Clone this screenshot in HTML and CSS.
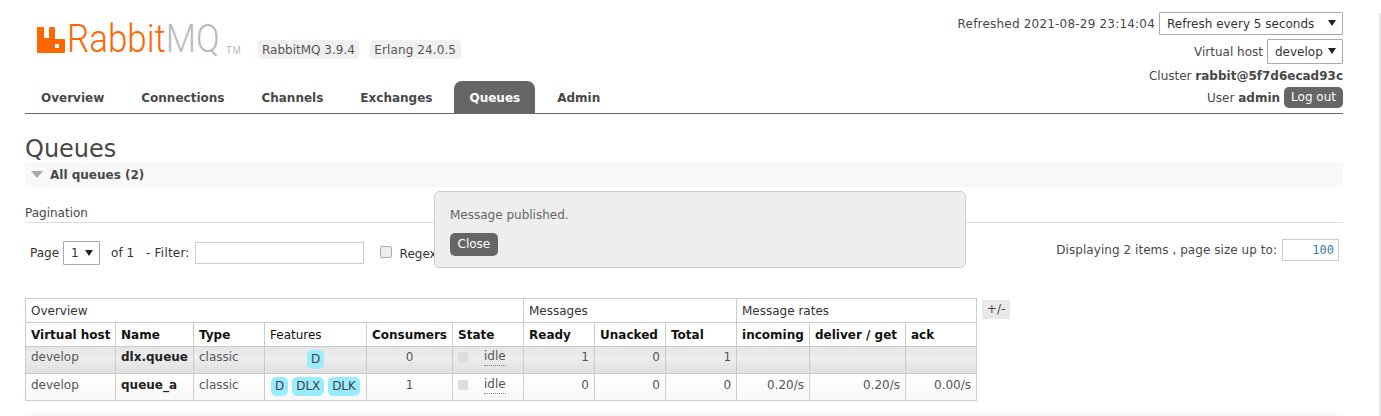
FILE: index.html
```html
<!DOCTYPE html>
<html lang="en">
<head>
<meta charset="utf-8">
<title>RabbitMQ Management</title>
<link rel="stylesheet" href="styles.css">
</head>
<body>
<div class="page">
  <header class="header">
    <div class="brand">
      <div class="logo">
        <svg class="logo-mark" width="28" height="26" viewBox="0 0 28 26"><path fill="#f60" fill-rule="evenodd" d="M1 0h5a1 1 0 0 1 1 1v10h5V1a1 1 0 0 1 1-1h4a1 1 0 0 1 1 1v11h9a1 1 0 0 1 1 1v12a1 1 0 0 1-1 1H1a1 1 0 0 1-1-1V1a1 1 0 0 1 1-1zm17 17v4h4v-4z"/></svg>
        <span class="logo-text"><span class="rabbit">Rabbit</span><span class="mq">MQ</span></span>
        <span class="tm">TM</span>
      </div>
      <span class="version first">RabbitMQ 3.9.4</span>
      <span class="version second">Erlang 24.0.5</span>
    </div>
    <div class="status">
      <div class="status-row refresh-row"><span class="digits">Refreshed 2021-08-29 23:14:04</span><span class="select select-refresh">Refresh every 5 seconds<i class="arrow"></i></span></div>
      <div class="status-row vhost-row"><span>Virtual host</span><span class="select select-vhost">develop<i class="arrow"></i></span></div>
      <div class="status-row cluster-row"><span>Cluster <b>rabbit@5f7d6ecad93c</b></span></div>
      <div class="status-row user-row"><span>User <b>admin</b></span><span class="btn logout">Log out</span></div>
    </div>
    <nav class="tabs">
      <a class="tab">Overview</a>
      <a class="tab">Connections</a>
      <a class="tab">Channels</a>
      <a class="tab">Exchanges</a>
      <a class="tab active">Queues</a>
      <a class="tab">Admin</a>
    </nav>
  </header>

  <main>
    <h1>Queues</h1>
    <div class="section-head"><span class="triangle"></span>All queues (2)</div>
    <h3>Pagination</h3>
    <div class="pager">
      <div class="pager-left">
        <span>Page</span>
        <span class="select select-page">1<i class="arrow"></i></span>
        <span class="of">of 1</span>
        <span class="filter-label">- Filter:</span>
        <span class="filter-input"></span>
        <span class="checkbox"></span>
        <span class="regex">Regex</span>
      </div>
      <div class="pager-right">
        <span class="display-count">Displaying 2 items , page size up to:</span>
        <span class="size-input">100</span>
      </div>
    </div>

    <div class="table-wrap">
      <table class="queues">
        <colgroup>
          <col class="c1"><col class="c2"><col class="c3"><col class="c4"><col class="c5"><col class="c6">
          <col class="c7"><col class="c8"><col class="c9"><col class="c10"><col class="c11"><col class="c12">
        </colgroup>
        <thead>
          <tr class="group"><th colspan="6">Overview</th><th colspan="3">Messages</th><th colspan="3">Message rates</th></tr>
          <tr class="cols">
            <th>Virtual host</th><th>Name</th><th>Type</th><th class="plain">Features</th><th>Consumers</th><th>State</th>
            <th>Ready</th><th>Unacked</th><th>Total</th><th>incoming</th><th>deliver / get</th><th>ack</th>
          </tr>
        </thead>
        <tbody>
          <tr class="alt1">
            <td>develop</td><td class="name">dlx.queue</td><td>classic</td>
            <td class="center"><span class="tag">D</span></td>
            <td class="center">0</td>
            <td><span class="state"><i class="dot"></i><abbr>idle</abbr></span></td>
            <td class="num">1</td><td class="num">0</td><td class="num">1</td>
            <td></td><td></td><td></td>
          </tr>
          <tr class="alt2">
            <td>develop</td><td class="name">queue_a</td><td>classic</td>
            <td class="center"><span class="tag">D</span> <span class="tag">DLX</span> <span class="tag">DLK</span></td>
            <td class="center">1</td>
            <td><span class="state"><i class="dot"></i><abbr>idle</abbr></span></td>
            <td class="num">0</td><td class="num">0</td><td class="num">0</td>
            <td class="num">0.20/s</td><td class="num">0.20/s</td><td class="num">0.00/s</td>
          </tr>
        </tbody>
      </table>
      <span class="plus-minus">+/-</span>
    </div>
    <div class="next-section"></div>
  </main>
</div>

<div class="popup">
  <p>Message published.</p>
  <span class="btn close">Close</span>
</div>
<div class="edge"></div>
</body>
</html>
```
FILE: styles.css
```css
* { box-sizing: border-box; }
html, body { margin: 0; height: 416px; overflow: hidden; background: #fff; }
body { font: 12px/16px "DejaVu Sans", Verdana, sans-serif; color: #484848; position: relative; }
.page { padding: 0 38px 0 25px; }
.edge { position: absolute; right: 0; top: 13px; bottom: 0; width: 2px; background: #e6e6e6; }

.header { position: relative; height: 114px; border-bottom: 1px solid #666; }
.brand { position: absolute; left: 12px; top: 25px; display: flex; align-items: flex-start; }
.logo { position: relative; width: 221px; height: 29px; flex: none; }
.logo-mark { position: absolute; left: 0; top: 2px; }
.logo-text { position: absolute; left: 30px; top: -5px; font: 300 38px/38px Roboto, sans-serif; transform: scaleX(.92); transform-origin: 0 0; white-space: nowrap; }
.rabbit { color: #f60; }
.mq { color: #bbb; }
.tm { position: absolute; left: 189px; top: 20px; font: 10px/11px "Liberation Sans", sans-serif; color: #bbb; letter-spacing: .5px; }
.version { margin-top: 15px; height: 19px; padding: 0 4px; background: #f0f0f0; border-radius: 4px; line-height: 20px; white-space: nowrap; color: #555; }
.version.first { margin-right: 11px; }
.version.second { padding: 0 4.5px; letter-spacing: .1px; }

.status { position: absolute; right: 0; top: 12px; display: flex; flex-direction: column; align-items: flex-end; }
.status-row { display: flex; align-items: center; white-space: nowrap; }
.digits { letter-spacing: .2px; }
.status b { color: #484848; }
.refresh-row { height: 23px; }
.vhost-row { height: 25px; margin-top: 4px; }
.cluster-row { height: 16px; margin-top: 4px; }
.user-row { height: 21px; margin-top: 3px; }
.select { position: relative; display: inline-block; height: 23px; line-height: 22px; border: 1px solid #aaa; background: #fff; border-radius: 1px; color: #333; padding-left: 7px; white-space: nowrap; }
.arrow { position: absolute; top: 7px; right: 6px; width: 0; height: 0; border-left: 4px solid transparent; border-right: 4px solid transparent; border-top: 6px solid #222; }
.select-refresh { width: 184px; margin-left: 4px; }
.select-vhost { width: 76px; height: 25px; line-height: 24px; margin-left: 4px; }
.select-vhost .arrow { top: 8px; }
.btn { display: inline-block; background: #666; color: #fff; border-radius: 5px; }
.logout { height: 21px; line-height: 21px; padding: 0 7px; margin-left: 4px; }

.tabs { position: absolute; left: 1px; bottom: 0; height: 32px; display: flex; }
.tab { height: 32px; padding: 0 15px; margin-right: 7px; line-height: 35px; font-weight: bold; color: #484848; white-space: nowrap; }
.tab.active { background: #666; color: #fff; border-radius: 8px 8px 0 0; }

main { display: block; }
h1 { margin: 20px 0 0; height: 28px; font-size: 24px; line-height: 31px; font-weight: normal; color: #484848; }
.section-head { display: flex; align-items: center; height: 25px; background: #f8f8f8; font-weight: bold; font-size: 12px; color: #484848; padding-left: 6px; }
.triangle { width: 0; height: 0; margin-right: 7px; border-left: 6px solid transparent; border-right: 6px solid transparent; border-top: 7px solid #aaa; }
h3 { margin: 18px 0 0; height: 18px; border-bottom: 1px solid #ddd; font-size: 12px; line-height: 17px; font-weight: normal; color: #484848; }

.pager { display: flex; justify-content: space-between; align-items: flex-start; height: 24px; margin-top: 18px; padding: 0 4px 0 5px; }
.pager-left, .pager-right { display: flex; align-items: center; white-space: nowrap; }
.pager-left { height: 24px; color: #333; }
.pager-right { height: 22px; margin-top: -2px; }
.display-count { letter-spacing: .05px; }
.select-page { width: 37px; height: 24px; line-height: 23px; margin-left: 4px; }
.select-page .arrow { top: 8px; }
.of { margin-left: 11px; }
.filter-label { margin-left: 12px; letter-spacing: .2px; }
.filter-input { width: 169px; height: 22px; margin-left: 5px; border: 1px solid #ccc; background: #fff; }
.checkbox { width: 12px; height: 12px; margin: -2px 0 0 16px; border: 1px solid #aaa; border-radius: 2px; background: #eee; }
.regex { margin: 2px 0 0 8px; }
.size-input { width: 57px; height: 22px; margin-left: 5px; border: 1px solid #ccc; padding-right: 4px; text-align: right; font: 12px/20px "DejaVu Sans Mono", "Liberation Mono", monospace; color: #3a7ca8; }

.table-wrap { display: flex; align-items: flex-start; margin-top: 33px; }
.queues { table-layout: fixed; width: 952px; border-collapse: collapse; border: 1px solid #ccc; }
.c1 { width: 90px; } .c2 { width: 78px; } .c3 { width: 71px; } .c4 { width: 102px; }
.c5 { width: 86px; } .c6 { width: 71px; } .c7 { width: 71px; } .c8 { width: 71px; }
.c9 { width: 71px; } .c10 { width: 73px; } .c11 { width: 96px; } .c12 { width: 71px; }
.queues th, .queues td { border: 1px solid #ccc; padding: 0 5px; text-align: left; white-space: nowrap; }
.queues th { color: #111; }
.group th { height: 24px; padding-top: 1px; font-weight: normal; color: #333; }
.cols th { height: 24px; font-weight: bold; }
.cols th.plain { font-weight: normal; }
.queues td { height: 27px; vertical-align: top; padding-top: 2px; color: #555; }
.queues .alt2 td { padding-top: 3px; }
.queues td.name { font-weight: bold; color: #222; }
.queues td.center { text-align: center; }
.queues td.num { text-align: right; }
.alt1 td { background: linear-gradient(#e6e6e6, #ededed 40%, #dfdfdf); }
.alt2 td { background: linear-gradient(#fff, #f8f8f8); }
.tag { display: inline-block; height: 19px; line-height: 19px; padding: 0 4px; margin-top: 1px; background: #99ebff; border-radius: 5px; color: #444; }
.alt2 .tag { margin-top: 0; }
.state { display: flex; align-items: center; height: 16px; }
.dot { width: 10px; height: 10px; background: #ddd; margin-right: 16px; }
abbr { border-bottom: 1px dotted #888; line-height: 14px; height: 17px; display: inline-block; }
.plus-minus { margin: 2px 0 0 5px; width: 28px; height: 19px; line-height: 19px; text-align: center; background: #e8e8e8; color: #484848; }
.next-section { height: 6px; margin-top: 12px; background: #f8f8f8; }

.popup { position: absolute; left: 434px; top: 191px; width: 532px; height: 77px; padding: 15px; background: #eee; border: 1px solid #ccc; border-radius: 5px; color: #666; }
.popup p { margin: 0 0 10px; line-height: 16px; }
.close { height: 23px; line-height: 23px; padding: 0 7.5px; }
```
